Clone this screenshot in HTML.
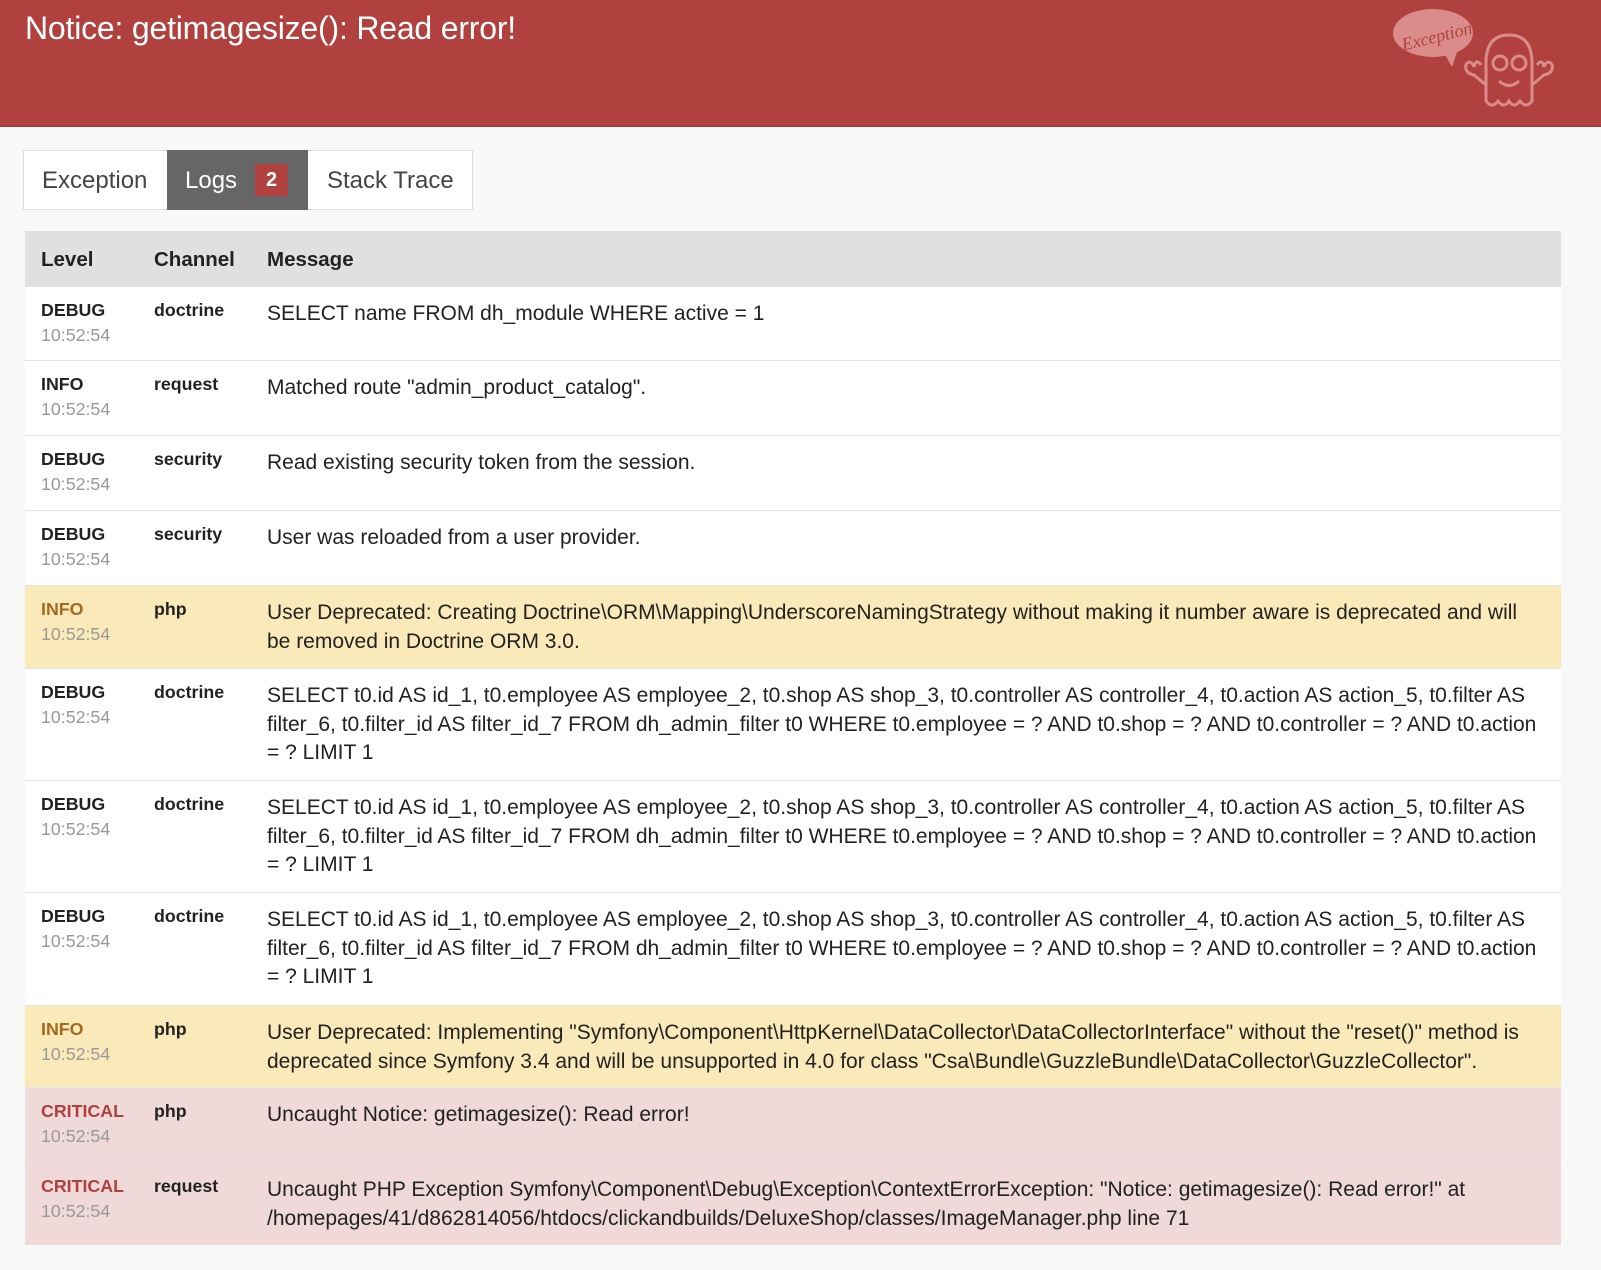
<!DOCTYPE html>
<html><head><meta charset="utf-8"><style>
*{margin:0;padding:0;box-sizing:border-box}
body{width:1601px;height:1270px;background:#f8f8f8;font-family:"Liberation Sans",Arial,sans-serif;color:#222;position:relative;overflow:hidden}
.hdr{position:absolute;left:0;top:0;width:1601px;height:127px;background:#b0413e;border-bottom:1px solid #9d3a37}
.hdr h1{position:absolute;left:25px;top:10px;font-size:32px;font-weight:normal;color:#fff;letter-spacing:-0.2px}
.tabs{position:absolute;left:23px;top:150px;height:60px;width:450px;background:#fff;border:1px solid #ddd}
.tab{position:absolute;top:-1px;height:60px;line-height:62px;font-size:24px;color:#444}
.tab.act{background:#666;color:#fff}
.badge{display:inline-block;background:#b0413e;color:#fff;font-weight:bold;font-size:20px;width:33px;height:32px;line-height:32px;text-align:center;vertical-align:2px;margin-left:18px}
.tbl{position:absolute;left:25px;top:231px;width:1536px}
.th{position:absolute;left:0;top:0;width:1536px;height:55px;background:#e0e0e0;font-weight:bold;font-size:20.5px}
.th span{position:absolute;top:17px}
.r{position:absolute;left:0;width:1536px;background:#fff;border-top:1px solid #e4e4e4}
.r.w{background:#fbeab9}
.r.c{background:#efd9d9}
.lv{position:absolute;left:16px;top:11px;font-weight:bold;font-size:17.8px;line-height:24px}
.tm{position:absolute;left:16px;top:36px;font-size:17.8px;color:#999;line-height:24px}
.ch{position:absolute;left:129px;top:11px;font-weight:bold;font-size:17.8px;line-height:24px}
.msg{position:absolute;left:242px;top:13px;font-size:21px;line-height:28.6px;white-space:nowrap;color:#222}
.w .lv{color:#a46a1f}
.c .lv{color:#b0413e}
</style></head><body>
<div class="hdr"><h1>Notice: getimagesize(): Read error!</h1>
<svg style="position:absolute;left:1388px;top:3px" width="180" height="110" viewBox="0 0 180 110" fill="none" stroke="#d98c8a" stroke-width="3">
<ellipse cx="45" cy="30" rx="40" ry="24" fill="#d98c8a" stroke="none"/>
<path d="M55 48 L64 64 L70 46" fill="#d98c8a" stroke="none"/>
<text x="12" y="40" font-family="Liberation Serif,serif" font-style="italic" font-size="18" fill="#b0413e" stroke="none" transform="rotate(-14 45 30)">Exception!</text>
<path d="M98 98 L98 60 Q98 32 121 32 Q144 32 144 60 L144 98 Q138 106 132 98 Q126 106 121 98 Q116 106 110 98 Q104 106 98 98Z"/>
<circle cx="112" cy="60" r="7"/><circle cx="131" cy="60" r="7"/>
<path d="M111 78 Q121 87 131 78"/>
<path d="M98 82 L86 72 Q76 70 78 61 M78 61 Q83 56 86 64 M86 64 Q88 55 93 62"/>
<path d="M144 82 L156 72 Q166 70 164 61 M164 61 Q159 56 156 64 M156 64 Q154 55 149 62"/>
</svg>
</div>
<div class="tabs">
<div class="tab" style="left:18px">Exception</div>
<div class="tab act" style="left:143px;width:141px;padding-left:18px">Logs<span class="badge">2</span></div>
<div class="tab" style="left:303px">Stack Trace</div>
</div>
<div class="tbl">
<div class="th"><span style="left:16px">Level</span><span style="left:129px">Channel</span><span style="left:242px">Message</span></div>
<div class="r" style="top:55px;height:74px"><div class="lv">DEBUG</div><div class="tm">10:52:54</div><div class="ch">doctrine</div><div class="msg">SELECT name FROM dh_module WHERE active = 1</div></div>
<div class="r" style="top:129px;height:75px"><div class="lv">INFO</div><div class="tm">10:52:54</div><div class="ch">request</div><div class="msg">Matched route "admin_product_catalog".</div></div>
<div class="r" style="top:204px;height:75px"><div class="lv">DEBUG</div><div class="tm">10:52:54</div><div class="ch">security</div><div class="msg">Read existing security token from the session.</div></div>
<div class="r" style="top:279px;height:75px"><div class="lv">DEBUG</div><div class="tm">10:52:54</div><div class="ch">security</div><div class="msg">User was reloaded from a user provider.</div></div>
<div class="r w" style="top:354px;height:83px"><div class="lv">INFO</div><div class="tm">10:52:54</div><div class="ch">php</div><div class="msg">User Deprecated: Creating Doctrine\ORM\Mapping\UnderscoreNamingStrategy without making it number aware is deprecated and will<br>be removed in Doctrine ORM 3.0.</div></div>
<div class="r" style="top:437px;height:112px"><div class="lv">DEBUG</div><div class="tm">10:52:54</div><div class="ch">doctrine</div><div class="msg">SELECT t0.id AS id_1, t0.employee AS employee_2, t0.shop AS shop_3, t0.controller AS controller_4, t0.action AS action_5, t0.filter AS<br>filter_6, t0.filter_id AS filter_id_7 FROM dh_admin_filter t0 WHERE t0.employee = ? AND t0.shop = ? AND t0.controller = ? AND t0.action<br>= ? LIMIT 1</div></div>
<div class="r" style="top:549px;height:112px"><div class="lv">DEBUG</div><div class="tm">10:52:54</div><div class="ch">doctrine</div><div class="msg">SELECT t0.id AS id_1, t0.employee AS employee_2, t0.shop AS shop_3, t0.controller AS controller_4, t0.action AS action_5, t0.filter AS<br>filter_6, t0.filter_id AS filter_id_7 FROM dh_admin_filter t0 WHERE t0.employee = ? AND t0.shop = ? AND t0.controller = ? AND t0.action<br>= ? LIMIT 1</div></div>
<div class="r" style="top:661px;height:113px"><div class="lv">DEBUG</div><div class="tm">10:52:54</div><div class="ch">doctrine</div><div class="msg">SELECT t0.id AS id_1, t0.employee AS employee_2, t0.shop AS shop_3, t0.controller AS controller_4, t0.action AS action_5, t0.filter AS<br>filter_6, t0.filter_id AS filter_id_7 FROM dh_admin_filter t0 WHERE t0.employee = ? AND t0.shop = ? AND t0.controller = ? AND t0.action<br>= ? LIMIT 1</div></div>
<div class="r w" style="top:774px;height:82px"><div class="lv">INFO</div><div class="tm">10:52:54</div><div class="ch">php</div><div class="msg">User Deprecated: Implementing "Symfony\Component\HttpKernel\DataCollector\DataCollectorInterface" without the "reset()" method is<br>deprecated since Symfony 3.4 and will be unsupported in 4.0 for class "Csa\Bundle\GuzzleBundle\DataCollector\GuzzleCollector".</div></div>
<div class="r c" style="top:856px;height:75px"><div class="lv">CRITICAL</div><div class="tm">10:52:54</div><div class="ch">php</div><div class="msg">Uncaught Notice: getimagesize(): Read error!</div></div>
<div class="r c" style="top:931px;height:83px"><div class="lv">CRITICAL</div><div class="tm">10:52:54</div><div class="ch">request</div><div class="msg">Uncaught PHP Exception Symfony\Component\Debug\Exception\ContextErrorException: "Notice: getimagesize(): Read error!" at<br>/homepages/41/d862814056/htdocs/clickandbuilds/DeluxeShop/classes/ImageManager.php line 71</div></div>
</div>
</body></html>
